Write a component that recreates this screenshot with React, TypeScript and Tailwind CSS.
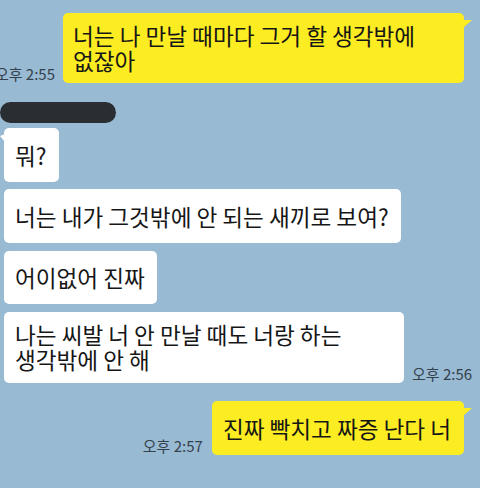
import React from "react";

const font = { fontFamily: '"Noto Sans CJK KR", "Noto Sans", sans-serif' };

function RightTail() {
  return (
    <svg className="absolute right-[-8px] top-[6px]" width="9" height="10" viewBox="0 0 9 10">
      <polygon points="0,1 9,1 0,9" fill="#fcec22" />
    </svg>
  );
}

function LeftTail() {
  return (
    <svg className="absolute left-[-4px] top-[6px]" width="5" height="9" viewBox="0 0 5 9">
      <polygon points="5,0 0,2 5,8" fill="#ffffff" />
    </svg>
  );
}

function Time({ children }: { children: React.ReactNode }) {
  return (
    <div className="shrink-0 whitespace-nowrap text-[15px] leading-[17px] text-[#34404b] mb-[1px]">
      {children}
    </div>
  );
}

export default function App() {
  return (
    <div
      className="w-[480px] h-[488px] bg-[#99bad3] overflow-hidden flex flex-col text-[#161616]"
      style={font}
    >
      {/* Row 1 */}
      <div className="flex justify-end items-end gap-[8px] pr-[16px] mt-[13px]">
        <Time>오후 2:55</Time>
        <div className="relative shrink-0 w-[401px] h-[70px] bg-[#fcec22] rounded-[5px] pl-[10px] pt-[10px] text-[22.6px] leading-[25px] whitespace-nowrap">
          너는 나 만날 때마다 그거 할 생각밖에
          <br />
          없잖아
          <RightTail />
        </div>
      </div>

      {/* Redacted name */}
      <div className="mt-[19px] w-[116px] h-[21px] rounded-full bg-[#2a2e33]" />

      {/* Left bubbles */}
      <div className="flex flex-col items-start gap-[7px] mt-[5px] pl-[4px] text-[22.6px] leading-[25px] whitespace-nowrap">
        <div className="relative h-[54px] flex items-center bg-white rounded-[5px] pl-[11px] pr-[12px]">
          뭐?
          <LeftTail />
        </div>
        <div className="h-[54px] flex items-center bg-white rounded-[5px] pl-[11px] pr-[12px]">
          너는 내가 그것밖에 안 되는 새끼로 보여?
        </div>
        <div className="h-[53px] flex items-center bg-white rounded-[5px] pl-[11px] pr-[12px] mt-[1px]">
          어이없어 진짜
        </div>
        <div className="flex items-end gap-[8px] mt-[1px]">
          <div className="w-[400px] h-[71px] bg-white rounded-[5px] pl-[11px] pt-[10px]">
            나는 씨발 너 안 만날 때도 너랑 하는
            <br />
            생각밖에 안 해
          </div>
          <Time>오후 2:56</Time>
        </div>
      </div>

      {/* Row last */}
      <div className="flex justify-end items-end gap-[9px] pr-[16px] mt-[18px]">
        <Time>오후 2:57</Time>
        <div className="relative shrink-0 h-[54px] flex items-center bg-[#fcec22] rounded-[5px] pl-[11px] pr-[13px] text-[22.6px] leading-[25px] whitespace-nowrap">
          진짜 빡치고 짜증 난다 너
          <RightTail />
        </div>
      </div>
    </div>
  );
}
